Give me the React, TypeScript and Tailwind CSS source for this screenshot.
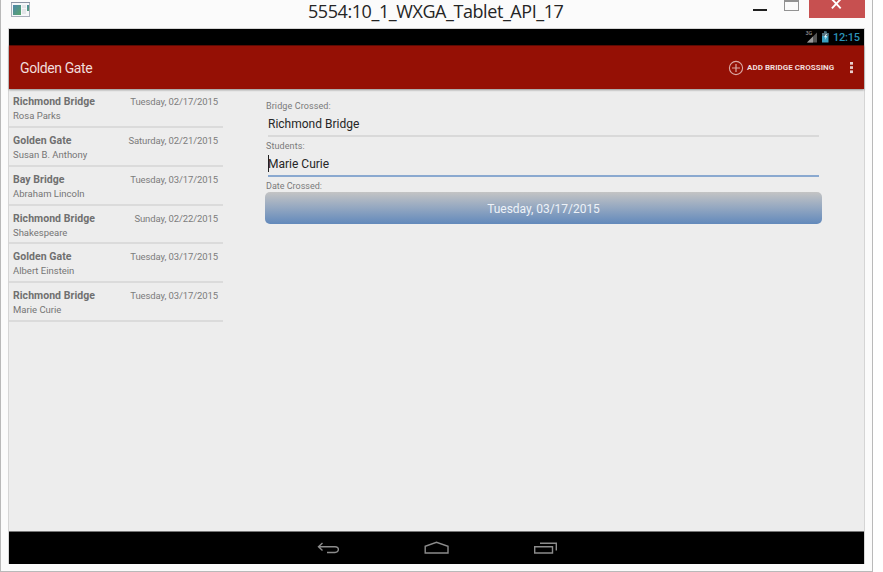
import React from "react";

type Crossing = { bridge: string; student: string; date: string; rule: string };

const crossings: Crossing[] = [
  { bridge: "Richmond Bridge", student: "Rosa Parks", date: "Tuesday, 02/17/2015", rule: "h-[39px]" },
  { bridge: "Golden Gate", student: "Susan B. Anthony", date: "Saturday, 02/21/2015", rule: "h-[39px]" },
  { bridge: "Bay Bridge", student: "Abraham Lincoln", date: "Tuesday, 03/17/2015", rule: "h-[39px]" },
  { bridge: "Richmond Bridge", student: "Shakespeare", date: "Sunday, 02/22/2015", rule: "h-[38px]" },
  { bridge: "Golden Gate", student: "Albert Einstein", date: "Tuesday, 03/17/2015", rule: "h-[39px]" },
  { bridge: "Richmond Bridge", student: "Marie Curie", date: "Tuesday, 03/17/2015", rule: "h-[39px]" },
];

function TitleBar() {
  return (
    <div className="relative h-[28px] shrink-0">
      <svg className="absolute left-[11px] top-[2px]" width="19" height="15" viewBox="0 0 19 15">
        <defs>
          <linearGradient id="pane" x1="0" y1="0" x2="1" y2="1">
            <stop offset="0" stopColor="#4e86ab" />
            <stop offset="1" stopColor="#58a56b" />
          </linearGradient>
        </defs>
        <rect x="0.5" y="0.5" width="18" height="14" fill="#f6f7f9" stroke="#a9afbb" />
        <path d="M0 .5H19" stroke="#8c94a4" />
        <rect x="2" y="3" width="8" height="10" fill="url(#pane)" />
        <rect x="11" y="3" width="4" height="3" fill="#e3e5e8" />
        <rect x="11" y="7" width="4" height="5" fill="#e3e5e8" />
        <rect x="16" y="3" width="2" height="6" fill="url(#pane)" />
      </svg>
      <div className="absolute left-[308px] top-[-1px] whitespace-nowrap font-['Open_Sans','Noto_Sans',sans-serif] text-[18px] leading-[24px] tracking-[-0.43px] text-[#252525]">
        5554:10_1_WXGA_Tablet_API_17
      </div>
      <div className="absolute left-[753px] top-[9px] h-[2px] w-[14px] bg-[#202020]" />
      <div className="absolute left-[784px] top-0 h-[11px] w-[15px] border border-t-2 border-[#929292]" />
      <div className="absolute left-[809px] top-0 h-[18px] w-[56px] bg-[#c75050]">
        <svg className="absolute left-[22px] top-0" width="11" height="9" viewBox="0 0 11 9">
          <path d="M.9-.9 9.7 8.3M9.7-.9.9 8.3" stroke="#fff" strokeWidth="1.9" fill="none" />
        </svg>
      </div>
    </div>
  );
}

function StatusBar() {
  return (
    <div className="flex h-[16px] shrink-0 items-center justify-end bg-black pr-[4px]">
      <svg width="25" height="14" viewBox="0 0 25 14" className="mr-[3px]">
        <text x="0.500" y="5.4" fontSize="5.5" fontFamily="Roboto" fill="#aaa">3G</text>
        <path d="M2 12.5 12 2.5V12.5Z" fill="#555" />
        <path d="M2 12.5 8 6.5V12.5Z" fill="#999" />
        <path d="M17.500 3h1.500V1.500h2.500V3h2v9.500H17V3Z" fill="#3a9fc0" />
        <path d="M17.500 3h1.500V1.500h2.500V3h2v3H17V3Z" fill="#54717d" />
        <path d="M21 4 19 7.300h1.700L19.800 10l2.500-3.700h-1.600L22 4Z" fill="#e7fbff" />
      </svg>
      <span className="mt-[2px] w-[27px] whitespace-nowrap text-[11px] font-medium leading-[14px] tracking-[-0.2px] text-[#2c93b8]">12:15</span>
    </div>
  );
}

function ActionBar() {
  return (
    <div className="z-10 flex h-[44px] shrink-0 items-center border-t border-[#5d0a03] bg-[#951005] pl-[11px] pr-[10px] shadow-[0_1px_2px_rgba(0,0,0,0.4)]">
      <span className="mt-px text-[14px] leading-[18px] tracking-[-0.4px] text-[#f0dcdb]">Golden Gate</span>
      <svg className="ml-auto" width="16" height="16" viewBox="0 0 16 16" fill="none" stroke="#dba8a4">
        <circle cx="8" cy="8" r="6.600" strokeWidth="1.100" />
        <path d="M8 4v8M4 8h8" strokeWidth="1.200" />
      </svg>
      <span className="ml-[3px] w-[88px] whitespace-nowrap text-[8px] font-bold leading-[12px] tracking-[0.03px] text-[#f0dcdb]">ADD BRIDGE CROSSING</span>
      <svg className="ml-[14px]" width="5" height="13" viewBox="0 0 5 13" fill="#e8cfcd">
        <rect x="1" y="1" width="3" height="2.700" />
        <rect x="1" y="5.200" width="3" height="2.700" />
        <rect x="1" y="9.400" width="3" height="2.700" />
      </svg>
    </div>
  );
}

function CrossingList() {
  return (
    <div className="w-[214px] shrink-0">
      {crossings.map((c, i) => (
        <div key={i} className={`${c.rule} flex justify-between border-b-2 border-[#dbdbdb] pl-[4px] pr-[5px]`}>
          <div className="whitespace-nowrap pt-[6px]">
            <div className="text-[10.500px] font-bold leading-[14px] tracking-[0.05px] text-[#707070]">{c.bridge}</div>
            <div className="text-[9.500px] leading-[14px] text-[#757575]">{c.student}</div>
          </div>
          <div className="whitespace-nowrap pt-[6px] text-[9.500px] leading-[13px] tracking-[-0.1px] text-[#7c7c7c]">{c.date}</div>
        </div>
      ))}
    </div>
  );
}

function CrossingForm() {
  return (
    <div className="ml-[42px] w-[557px] pt-[11px]">
      <div className="pl-[1px] text-[9px] leading-[12px] tracking-[0.1px] text-[#7a7a7a]">Bridge Crossed:</div>
      <div className="ml-[3px] mr-[3px] h-[25px] border-b-2 border-[#d9d9d9] pt-[4px] text-[12px] leading-[16px] text-[#262626]">Richmond Bridge</div>
      <div className="mt-[3px] pl-[1px] text-[9px] leading-[12px] tracking-[0.1px] text-[#7a7a7a]">Students:</div>
      <div className="relative ml-[3px] mr-[3px] h-[25px] border-b-2 border-[#8aa9d0] pt-[4px] text-[12px] leading-[16px] text-[#262626]">
        <span className="absolute left-0 top-[3px] h-[17px] w-px bg-[#222]" />
        Marie Curie
      </div>
      <div className="mt-[3px] pl-[1px] text-[9px] leading-[12px] text-[#7a7a7a]">Date Crossed:</div>
      <button className="block h-[32px] w-full rounded-[5px] bg-linear-to-b from-[#c4c4c4] to-[#6289bb] pt-px text-center text-[12px] leading-[32px] tracking-[-0.03px] text-[#edf2f8]">Tuesday, 03/17/2015</button>
    </div>
  );
}

function NavBar() {
  return (
    <div className="relative h-[33px] shrink-0 border-t border-[#777] bg-black">
      <svg className="absolute left-[308px] top-[9px]" width="242" height="16" viewBox="0 0 242 16" fill="none" stroke="#8c8c8c" strokeWidth="1.400">
        <path d="M1.500 5.700H18C22.500 5.700 22.500 11.500 18 11.500H10M5.500 2 1.500 5.700 5.500 9.400" />
        <path d="M108.200 12V5.300L119.500 1.300 131 5.300V12Z" />
        <path d="M217.700 5.700H235.500V12H217.700ZM223 2.200H239.300V9.500" />
      </svg>
    </div>
  );
}

export default function App() {
  return (
    <div className="h-[572px] w-[883px] overflow-hidden bg-white font-['Roboto',sans-serif]">
      <div className="flex h-[572px] w-[873px] flex-col border-x border-b border-[#b9b9b9] bg-[#fbfbfb]">
        <div className="-ml-px flex flex-col">
          <TitleBar />
          <div className="ml-[8px] flex h-[536px] w-[857px] flex-col border-x border-t border-[#d5d5d5]">
            <StatusBar />
            <ActionBar />
            <div className="flex min-h-0 grow bg-[#ededed]">
              <CrossingList />
              <CrossingForm />
            </div>
            <NavBar />
          </div>
        </div>
      </div>
    </div>
  );
}
